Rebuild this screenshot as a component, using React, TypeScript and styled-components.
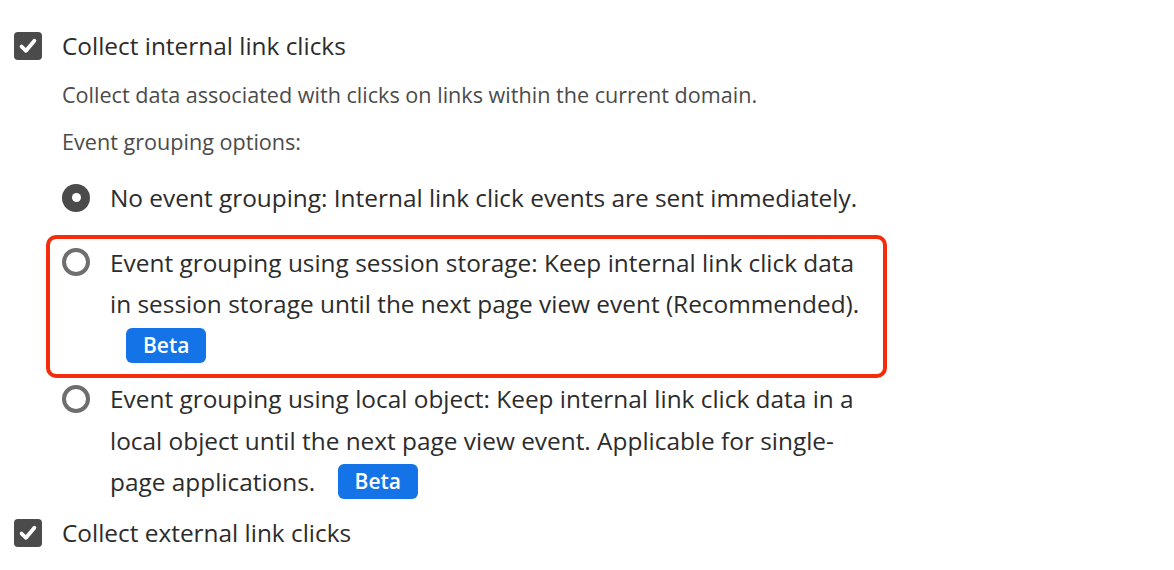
import styled, { createGlobalStyle } from "styled-components";

const GlobalStyle = createGlobalStyle`
  html, body {
    margin: 0;
    background: #ffffff;
  }
  body {
    font-family: "Open Sans", "Noto Sans", sans-serif;
    color: #2c2c2c;
  }
`;

const Page = styled.div`
  padding: 32px 14px 0 14px;
`;

const CheckRow = styled.label<{ $top?: number }>`
  display: flex;
  align-items: center;
  gap: 20px;
  height: 28px;
  margin-top: ${({ $top }) => $top ?? 0}px;
`;

const Box = styled.span`
  width: 28px;
  height: 28px;
  flex: none;
  border-radius: 4px;
  background: #4b4b4b;
  display: flex;
  align-items: center;
  justify-content: center;
`;

const Label = styled.span`
  font-size: 24.4px;
  line-height: 28px;
  color: #2c2c2c;
`;

const Body = styled.div`
  padding-left: 48px;
`;

const Help = styled.p<{ $top: number }>`
  margin: ${({ $top }) => $top}px 0 0;
  font-size: 21.6px;
  line-height: 28px;
  color: #4b4b4b;
`;

const Options = styled.div`
  margin-top: 21px;
  display: flex;
  flex-direction: column;
`;

const Option = styled.div`
  display: flex;
  align-items: flex-start;
  gap: 20px;
`;

const Highlight = styled.div`
  box-sizing: border-box;
  width: 841px;
  margin: 16px 0 0 -16px;
  padding: 3px 12px 8px 12px;
  border: 4px solid #f52b0c;
  border-radius: 10px;
`;

const Radio = styled.span<{ $checked?: boolean }>`
  box-sizing: border-box;
  width: 28px;
  height: 28px;
  flex: none;
  margin-top: 6.5px;
  border-radius: 50%;
  display: flex;
  align-items: center;
  justify-content: center;
  background: ${({ $checked }) => ($checked ? "#4b4b4b" : "#ffffff")};
  border: ${({ $checked }) => ($checked ? "none" : "4px solid #6e6e6e")};

  &::after {
    content: "";
    display: ${({ $checked }) => ($checked ? "block" : "none")};
    width: 9px;
    height: 9px;
    border-radius: 50%;
    background: #ffffff;
  }
`;

const OptionText = styled.div`
  font-size: 24.4px;
  line-height: 41.5px;
  color: #2c2c2c;
`;

const Badge = styled.span`
  display: inline-block;
  box-sizing: border-box;
  margin-left: 16px;
  padding: 0 17px;
  height: 35px;
  line-height: 35px;
  border-radius: 6px;
  background: #1473e6;
  color: #ffffff;
  font-size: 21px;
  font-weight: 600;
  vertical-align: 2px;
`;

const Check = () => (
  <svg width="20" height="20" viewBox="0 0 20 20" aria-hidden="true">
    <path
      d="M3.6 10.6 L8 14.8 L16.4 4.8"
      fill="none"
      stroke="#ffffff"
      strokeWidth="3.8"
      strokeLinecap="round"
      strokeLinejoin="round"
    />
  </svg>
);

export default function App() {
  return (
    <>
      <GlobalStyle />
      <Page>
        <CheckRow>
          <Box>
            <Check />
          </Box>
          <Label>Collect internal link clicks</Label>
        </CheckRow>
        <Body>
          <Help $top={21}>
            Collect data associated with clicks on links within the current domain.
          </Help>
          <Help $top={19}>Event grouping options:</Help>
          <Options>
            <Option>
              <Radio $checked />
              <OptionText>
                No event grouping: Internal link click events are sent immediately.
              </OptionText>
            </Option>
            <Highlight>
              <Option>
                <Radio />
                <OptionText>
                  Event grouping using session storage: Keep internal link click data
                  <br />
                  in session storage until the next page view event (Recommended).
                  <br />
                  <Badge>Beta</Badge>
                </OptionText>
              </Option>
            </Highlight>
            <Option>
              <Radio />
              <OptionText>
                Event grouping using local object: Keep internal link click data in a
                <br />
                local object until the next page view event. Applicable for single-
                <br />
                page applications. <Badge>Beta</Badge>
              </OptionText>
            </Option>
          </Options>
        </Body>
        <CheckRow $top={16.5}>
          <Box>
            <Check />
          </Box>
          <Label>Collect external link clicks</Label>
        </CheckRow>
      </Page>
    </>
  );
}
